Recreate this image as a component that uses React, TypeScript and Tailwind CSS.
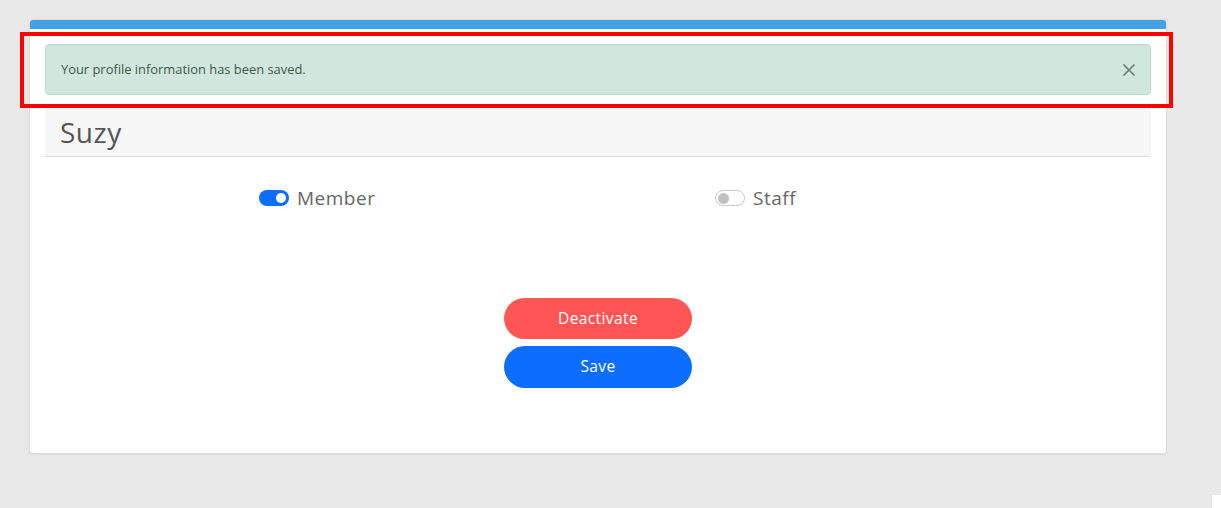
import React from "react";

function Toggle({ on }: { on: boolean }) {
  return on ? (
    <span className="flex h-[16px] w-[30px] items-center justify-end rounded-full bg-[#0d6efd] pr-[3px]">
      <span className="h-[10px] w-[10px] rounded-full bg-white" />
    </span>
  ) : (
    <span className="flex h-[16px] w-[30px] items-center justify-start rounded-full border border-[#c8c8c8] bg-white pl-[2px]">
      <span className="h-[11px] w-[11px] rounded-full bg-[#c2c2c2]" />
    </span>
  );
}

export default function App() {
  return (
    <div
      className="relative min-h-[508px] bg-[#e8e8e8] pl-[29px] pt-[19px]"
      style={{ fontFamily: '"Open Sans", "Liberation Sans", sans-serif' }}
    >
      <div className="h-[435px] w-[1138px] overflow-hidden rounded-[4px] border border-[#dcdcdc] bg-white shadow-[0_1px_1px_rgba(0,0,0,0.06)]">
        <div className="h-[9px] bg-[#44a2e4]" />
        <div className="px-[15px] pt-[15px]">
          <div className="flex h-[51px] items-center justify-between rounded-[4px] border border-[#badbcc] bg-[#d1e7dd] pl-[15px] pr-[14px]">
            <span className="text-[12.9px] text-[#3d5a4a]">Your profile information has been saved.</span>
            <svg width="14" height="14" viewBox="0 0 14 14" className="text-[#6a7a72]">
              <path d="M1.5 1.5 L12.5 12.5 M12.5 1.5 L1.5 12.5" stroke="currentColor" strokeWidth="1.6" />
            </svg>
          </div>
          <div className="mt-[12px] flex h-[50px] items-center border-b border-[#dcdcdc] bg-[#f6f6f6] pl-[15px]">
            <span className="text-[28px] tracking-[0.5px] text-[#555]">Suzy</span>
          </div>
          <div className="mt-[31px] flex h-[20px] items-center pl-[214px]">
            <div className="flex w-[456px] items-center gap-[8px]">
              <Toggle on />
              <span className="text-[19px] tracking-[0.5px] text-[#666]">Member</span>
            </div>
            <div className="flex items-center gap-[8px]">
              <Toggle on={false} />
              <span className="text-[19px] tracking-[0.5px] text-[#666]">Staff</span>
            </div>
          </div>
          <div className="mt-[90px] flex flex-col items-center gap-[7px]">
            <button className="h-[41px] w-[188px] rounded-full bg-[#ff5555] text-[15.5px] tracking-[0.4px] text-white">Deactivate</button>
            <button className="h-[42px] w-[188px] rounded-full bg-[#0d6efd] text-[15.5px] tracking-[0.4px] text-white">Save</button>
          </div>
        </div>
      </div>
      <div className="pointer-events-none absolute left-[20px] top-[32px] h-[76px] w-[1153px] border-4 border-[#ff0000]" />
      <div className="absolute bottom-0 right-0 h-[13px] w-[9px] bg-white" />
    </div>
  );
}
